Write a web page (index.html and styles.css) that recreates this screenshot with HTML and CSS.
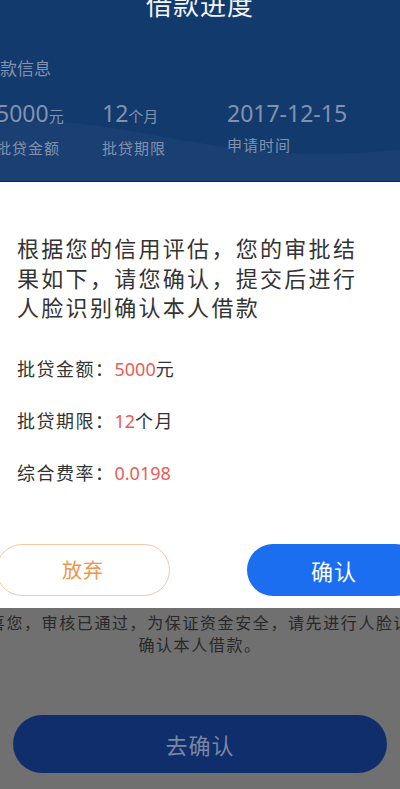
FILE: index.html
```html
<!DOCTYPE html>
<html lang="zh-CN">
<head>
    <meta charset="UTF-8">
    <meta name="viewport" content="width=device-width, initial-scale=1.0">
    <title>借款进度</title>
    <link rel="stylesheet" href="styles.css">
</head>
<body>
    <div class="page">
        <div class="header">
            <svg class="wave" width="400" height="70" viewBox="0 0 400 70" preserveAspectRatio="none">
                <path d="M0 12 C 80 2, 160 30, 260 40 C 320 46, 370 42, 400 38 L400 70 L0 70 Z" fill="#193f73"/>
            </svg>
            <h1 class="title">借款进度</h1>
            <div class="section-name">借款信息</div>
            <div class="stats">
                <div class="stat">
                    <div class="stat-value">5000<span class="unit">元</span></div>
                    <div class="stat-label">批贷金额</div>
                </div>
                <div class="stat">
                    <div class="stat-value">12<span class="unit">个月</span></div>
                    <div class="stat-label">批贷期限</div>
                </div>
                <div class="stat">
                    <div class="stat-value">2017-12-15</div>
                    <div class="stat-label">申请时间</div>
                </div>
            </div>
        </div>

        <div class="dialog">
            <p class="dialog-text">根据您的信用评估，您的审批结果如下，请您确认，提交后进行人脸识别确认本人借款</p>
            <div class="detail-list">
                <div class="detail-row">批贷金额：<span class="hl">5000</span>元</div>
                <div class="detail-row">批贷期限：<span class="hl">12</span>个月</div>
                <div class="detail-row">综合费率：<span class="hl">0.0198</span></div>
            </div>
            <div class="dialog-actions">
                <button class="btn-cancel">放弃</button>
                <button class="btn-ok">确认</button>
            </div>
        </div>

        <div class="mask-area">
            <p class="notice">恭喜您，审核已通过，为保证资金安全，请先进行人脸识别<br>确认本人借款。</p>
            <button class="btn-go">去确认</button>
        </div>
    </div>
</body>
</html>
```

FILE: styles.css
```css
* {
    box-sizing: border-box;
}
body {
    margin: 0;
    font-family: "Noto Sans CJK SC", "Noto Sans", sans-serif;
    background-color: #707070;
    overflow: hidden;
}
.page {
    width: 400px;
    height: 789px;
    overflow: hidden;
    display: flex;
    flex-direction: column;
}
.header {
    position: relative;
    height: 182px;
    background-color: #133a6d;
    border-bottom: 1px solid #0c2850;
    overflow: hidden;
}
.wave {
    position: absolute;
    left: 0;
    bottom: 0;
}
.title {
    position: relative;
    margin: -9px 0 0 0;
    font-size: 26px;
    line-height: 26px;
    font-weight: normal;
    color: #f2f4f8;
    text-align: center;
    letter-spacing: 1px;
}
.section-name {
    position: relative;
    margin: 39px 0 0 -17px;
    font-size: 17px;
    line-height: 24px;
    color: #8292ad;
}
.stats {
    position: relative;
    display: grid;
    grid-template-columns: 106px 125px auto;
    margin: 19px 0 0 -4px;
    color: #8292ad;
}
.stat-value {
    font-family: "Noto Sans", sans-serif;
    font-size: 23px;
    line-height: 28px;
}
.unit {
    font-family: "Noto Sans CJK SC", sans-serif;
    font-size: 15px;
}
.stat-label {
    margin-top: 8px;
    font-size: 15px;
    line-height: 20px;
    letter-spacing: 1px;
}
.dialog {
    background-color: #fff;
    padding: 51px 0 12px 17px;
}
.dialog-text {
    margin: 0;
    width: 350px;
    font-size: 22px;
    line-height: 29.5px;
    letter-spacing: 2.3px;
    color: #333;
}
.detail-list {
    margin-top: 33px;
    display: flex;
    flex-direction: column;
    gap: 25px;
}
.detail-row {
    font-size: 18px;
    line-height: 26px;
    letter-spacing: 1.5px;
    color: #333;
}
.hl {
    font-family: "Noto Sans", sans-serif;
    color: #e85d58;
    letter-spacing: 0;
}
.dialog-actions {
    display: flex;
    justify-content: space-between;
    margin: 58px -21px 0 -21px;
}
.dialog-actions button {
    height: 52px;
    width: 174px;
    border-radius: 26px;
    font-family: "Noto Sans CJK SC", sans-serif;
    cursor: pointer;
}
.btn-cancel {
    background-color: #fff;
    border: 1px solid #f3c9a2;
    color: #f0944a;
    font-size: 20px;
    letter-spacing: 1px;
}
.btn-ok {
    background-color: #1b6ef0;
    border: none;
    color: #fff;
    font-size: 22px;
    letter-spacing: 1px;
}
.mask-area {
    flex: 1;
    background-color: #707070;
    padding: 3px 13px 0 13px;
}
.notice {
    margin: 0 -50px;
    font-size: 16px;
    line-height: 22px;
    letter-spacing: 1.6px;
    color: #282828;
    text-align: center;
    white-space: nowrap;
}
.btn-go {
    display: block;
    width: 100%;
    height: 58px;
    margin-top: 60px;
    border: none;
    border-radius: 29px;
    background-color: #0f2e6b;
    color: #7a87a3;
    font-family: "Noto Sans CJK SC", sans-serif;
    font-size: 22px;
    letter-spacing: 1px;
    cursor: pointer;
}
```
